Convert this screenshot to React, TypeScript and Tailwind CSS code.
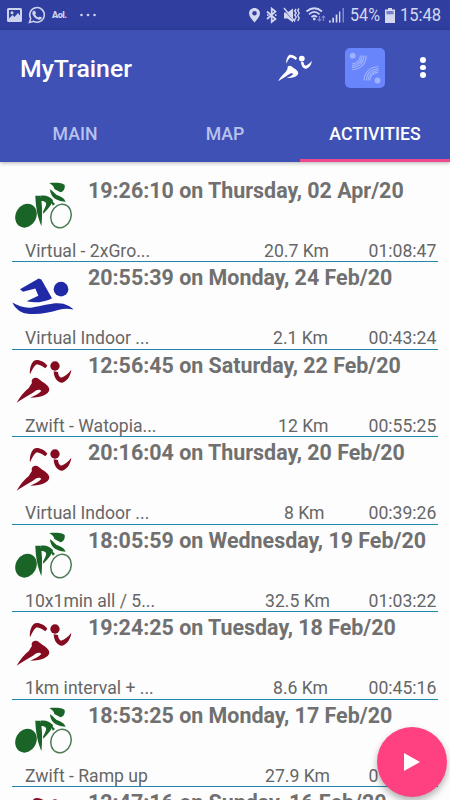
import React from "react";

type Sport = "bike" | "swim" | "run";

interface Activity {
  id: number;
  sport: Sport;
  date: string;
  name: string;
  distance: string;
  indent: string;
  duration: string;
}

const activities: Activity[] = [
  { id: 1, sport: "bike", date: "19:26:10 on Thursday, 02 Apr/20", name: "Virtual - 2xGro...", distance: "20.7 Km", indent: "pl-0", duration: "01:08:47" },
  { id: 2, sport: "swim", date: "20:55:39 on Monday, 24 Feb/20", name: "Virtual Indoor ...", distance: "2.1 Km", indent: "pl-[9px]", duration: "00:43:24" },
  { id: 3, sport: "run", date: "12:56:45 on Saturday, 22 Feb/20", name: "Zwift - Watopia...", distance: "12 Km", indent: "pl-[14px]", duration: "00:55:25" },
  { id: 4, sport: "run", date: "20:16:04 on Thursday, 20 Feb/20", name: "Virtual Indoor ...", distance: "8 Km", indent: "pl-[20px]", duration: "00:39:26" },
  { id: 5, sport: "bike", date: "18:05:59 on Wednesday, 19 Feb/20", name: "10x1min all / 5...", distance: "32.5 Km", indent: "pl-px", duration: "01:03:22" },
  { id: 6, sport: "run", date: "19:24:25 on Tuesday, 18 Feb/20", name: "1km interval + ...", distance: "8.6 Km", indent: "pl-[9px]", duration: "00:45:16" },
  { id: 7, sport: "bike", date: "18:53:25 on Monday, 17 Feb/20", name: "Zwift - Ramp up", distance: "27.9 Km", indent: "pl-px", duration: "01:00:12" },
  { id: 8, sport: "run", date: "12:47:16 on Sunday, 16 Feb/20", name: "Zwift - Watopia...", distance: "10 Km", indent: "pl-[14px]", duration: "00:50:31" },
];

function RunnerShape() {
  return (
    <>
      <circle cx="165" cy="48" r="14" />
      <path d="M90 73 C88 58 92 42 102 32 C112 26 132 33 142 47 L136 55 C127 49 118 44 110 43 C101 49 96 60 90 73Z" />
      <path d="M161 64 L174 66 C174 74 178 80 183 83 C195 80 205 70 214 59 C212 77 202 93 187 98 C174 99 162 86 161 64Z" />
      <path d="M50 158 C60 140 72 125 87 113 C91 106 93 103 96 98 C93 91 98 84 106 83 C113 82 118 88 125 94 C136 101 147 108 148 119 C146 132 128 142 91 143 C105 137 118 130 124 123 C121 118 115 118 109 121 C96 131 74 143 50 158Z" />
    </>
  );
}

function SportIcon({ sport }: { sport: Sport }) {
  if (sport === "bike") {
    return (
      <svg viewBox="36 30 186 150" className="h-[50px] w-[62px] shrink-0 fill-[#1b6428]">
        <ellipse cx="78" cy="137" rx="31" ry="37" transform="rotate(28 78 137)" />
        <path d="M106 77 L121 77 C128 102 127 142 124 168 C114 144 107 116 106 77Z" />
        <path d="M121 77 C136 74 150 79 159 90 C157 103 143 118 130 131 L129 125 C135 114 140 104 138 99 C134 93 127 92 122 93Z" />
        <path d="M148 39 C163 37 187 37 194 45 C196 56 190 66 181 67 C174 62 168 60 163 57 C162 48 155 44 148 39Z" />
        <path d="M150 58 C158 62 163 70 170 75 C181 79 193 84 197 95 C181 94 163 88 156 77 C153 72 150 65 150 58Z" />
        <path d="M152 89 L165 102 L158 107Z" />
        <ellipse cx="183" cy="138" rx="30" ry="36" fill="none" stroke="#4c7b54" strokeWidth="4.500" transform="rotate(20 183 138)" />
      </svg>
    );
  }
  if (sport === "swim") {
    return (
      <svg viewBox="36 7.5 186 150" className="h-[50px] w-[62px] shrink-0 fill-[#2029a6]">
        <circle cx="183" cy="71" r="22" />
        <path d="M60 71 L116 39 L124 42 L156 98 C145 105 132 107 117 110 C108 111 93 109 80 107 L115 91 L106 69 L69 79Z" />
        <path d="M37 111 C55 122 76 129 97 126 C130 120 166 109 190 115 C204 119 214 126 221 132 C204 129 192 129 177 133 C145 142 112 149 78 144 C58 140 45 128 37 111Z" />
      </svg>
    );
  }
  return (
    <svg viewBox="36 15 186 150" className="h-[50px] w-[62px] shrink-0 fill-[#850b21]">
      <RunnerShape />
    </svg>
  );
}

function StatusBar() {
  return (
    <div className="flex h-[30px] items-center bg-[#303f9f] text-[#d3d7f0]">
      <svg viewBox="0 0 225 30" className="h-[30px] w-[100px]" preserveAspectRatio="xMinYMin slice" fill="none">
        <g fill="#cdd2ef">
          <path fillRule="evenodd" d="M8.500 8 H20.500 Q22 8 22 9.500 V20.500 Q22 22 20.500 22 H8.500 Q7 22 7 20.500 V9.500 Q7 8 8.500 8Z M9 10 V18.500 L12.500 15 L14.500 17 L18 13 L20 15.500 V10Z" />
          <circle cx="12" cy="12.700" r="1.500" />
          <path d="M33.500 11 L35 10.800 L36 13.300 L35.100 14.500 C36 16.200 37.100 17 38.500 17.600 L39.700 16.400 L42 17.600 C41.700 19.600 39.800 20 38.200 19.500 C35.200 18.500 32.500 15.600 32.300 13.200 C32.300 12.200 32.800 11.400 33.500 11Z" />
        </g>
        <path d="M29.500 22.500 L30.700 18.500 A7.300 7.300 0 1 1 33.600 21.300Z" stroke="#cdd2ef" strokeWidth="1.500" />
        <text x="52" y="17.500" fill="#cdd2ef" fontFamily="Roboto, sans-serif" fontSize="9" fontWeight="900" textLength="15">Aol.</text>
        <g fill="#cdd2ef">
          <circle cx="81.500" cy="15" r="1.300" />
          <circle cx="88" cy="15" r="1.300" />
          <circle cx="94.500" cy="15" r="1.300" />
        </g>
      </svg>
      <svg viewBox="248 0 98 30" className="ml-[148px] h-[30px] w-[98px]" fill="none">
        <path fill="#d3d7f0" fillRule="evenodd" d="M254.500 8 C257.700 8 260 10.300 260 13.200 C260 16.500 257 19.500 254.500 22.500 C252 19.500 249 16.500 249 13.200 C249 10.300 251.300 8 254.500 8Z M254.500 11 A2.300 2.300 0 1 0 254.500 15.600 A2.300 2.300 0 1 0 254.500 11Z" />
        <path stroke="#d3d7f0" strokeWidth="1.700" d="M267 11.500 L275.500 19 L271.700 22 V8.500 L275.500 11.500 L267 19" />
        <path fill="#d3d7f0" d="M267 14.300h1.500v1.800H267zM275 14.300h1.500v1.800H275zM284 12.500h3.500l5.500-4v14l-5.500-4H284z" />
        <path stroke="#303f9f" strokeWidth="1" d="M283 9 L296 23" />
        <path stroke="#d3d7f0" strokeWidth="1.400" d="M284 8 L295 21.500 M296 9 l-1.300 2 l1.500 2 l-1.500 2 l1.500 2 l-1.500 3 M299 8.500 l-1.300 2 l1.500 2.500 l-1.500 2.500 l1.500 2.500 l-1.500 3" />
        <g stroke="#d3d7f0" strokeWidth="1.700">
          <path d="M306.500 11.500 Q314.300 5 322 11.500" />
          <path d="M309 14.300 Q314.300 9.500 319.500 14.300" />
          <path d="M311.500 17 Q314.300 14.500 317 17" />
        </g>
        <circle cx="314.300" cy="19" r="1.400" fill="#d3d7f0" />
        <path stroke="#7f89cb" strokeWidth="1.200" d="M319.500 16 V21 M317.700 19.300 L319.500 21 L321.300 19.300 M323.500 21 V16 M321.800 17.700 L323.500 16 L325.200 17.700" />
        <path fill="#d3d7f0" d="M329 20.500h1.700v2H329zM332.300 17.800h1.700v4.700h-1.700zM335.700 14.500h1.700v8h-1.700zM339 11.500h1.300v11H339z" />
        <path fill="#7f89cb" d="M342.500 8h1.500v14.500h-1.500z" />
      </svg>
      <span className="ml-[4px] w-[35px] origin-left scale-x-[0.850] whitespace-nowrap text-[19px] leading-[30px]">54%</span>
      <svg viewBox="0 0 10 15" className="h-[15px] w-[10px]">
        <path fill="#d3d7f0" d="M3 0h4v1.500h3V15H0V1.500h3z" />
        <path fill="#7580c4" d="M1.500 3h7v3.300h-7z" />
      </svg>
      <span className="ml-[5px] origin-left scale-x-[0.870] whitespace-nowrap text-[19px] leading-[30px]">15:48</span>
    </div>
  );
}

function Toolbar() {
  return (
    <div className="flex h-[75px] items-center pl-[20px]">
      <h1 className="w-[256px] pt-[3px] text-[24.800px] font-medium leading-none text-white">MyTrainer</h1>
      <svg viewBox="46 26 172 136" className="ml-px h-[28px] w-[36px] fill-white">
        <RunnerShape />
      </svg>
      <svg viewBox="0 0 40 40" className="ml-[32px] size-[40px]" fill="none">
        <rect width="40" height="40" rx="5" fill="#6885fb" />
        <circle cx="7.700" cy="7.700" r="2.900" fill="#9eb2fd" />
        <circle cx="32.500" cy="32.500" r="2.900" fill="#9eb2fd" />
        <g stroke="#9eb2fd" strokeWidth="1.200">
          <path d="M15.500 7.500 Q15 15 7 16" />
          <path d="M17.200 7.500 Q17 16.500 7 17.800" />
          <path d="M19 7.500 Q18.500 18.300 7 19.600" />
          <path d="M21.300 7.500 Q20.500 20.500 7.500 21.700" />
          <path d="M33.500 18.500 Q20.500 19.500 18.800 32.500" />
          <path d="M33.500 20.600 Q22.500 21.500 21 32.500" />
          <path d="M33.500 22.500 Q24 23.500 22.800 32.500" />
          <path d="M33 24.400 Q25.500 25 24.600 32.500" />
        </g>
      </svg>
      <div className="ml-[35px] flex flex-col gap-[2px]">
        <span className="size-[5.500px] rounded-full bg-white" />
        <span className="size-[5.500px] rounded-full bg-white" />
        <span className="size-[5.500px] rounded-full bg-white" />
      </div>
    </div>
  );
}

function ActivityRow({ activity }: { activity: Activity }) {
  return (
    <li className="flex h-[87.500px] shrink-0 flex-col border-b border-[#2089aa]">
      <div className="flex h-[63px] shrink-0 pt-[5.500px]">
        <SportIcon sport={activity.sport} />
        <h2 className="ml-[14px] -mt-[2.500px] whitespace-nowrap text-[21.430px] font-bold leading-[26px] text-[#707070]">
          {activity.date}
        </h2>
      </div>
      <div className="flex h-[22px] whitespace-nowrap pl-[13px] text-[17.600px] leading-[26px] text-[#666666]">
        <span className="w-[239px]">{activity.name}</span>
        <span className={`w-[104.500px] ${activity.indent}`}>{activity.distance}</span>
        <span>{activity.duration}</span>
      </div>
    </li>
  );
}

export default function App() {
  return (
    <div className="relative flex h-[800px] w-[450px] flex-col overflow-hidden bg-[#fdfdfd] font-['Roboto',sans-serif]">
      <StatusBar />
      <header className="z-10 h-[132px] shrink-0 bg-[#3f51b5] shadow-[0_1px_4px_rgba(0,0,0,0.3)]">
        <Toolbar />
        <nav className="grid h-[57px] grid-cols-3 text-center text-[17.700px] font-medium leading-[58px] text-[#b9c1ee]">
          <span>MAIN</span>
          <span>MAP</span>
          <span className="h-[57px] border-b-[3px] border-[#ec4a8c] text-white">ACTIVITIES</span>
        </nav>
      </header>
      <ul className="mx-3 mt-[12.500px] flex flex-col">
        {activities.map((activity) => (
          <ActivityRow key={activity.id} activity={activity} />
        ))}
      </ul>
      <button className="absolute left-[377px] top-[727px] z-20 flex size-[70px] items-center justify-center rounded-full bg-[#ff4081] shadow-[0_4px_7px_rgba(0,0,0,0.3)]">
        <svg viewBox="0 0 16 18" className="h-[18px] w-[16px] fill-white">
          <path d="M0 0 L16 9 L0 18Z" />
        </svg>
      </button>
    </div>
  );
}
